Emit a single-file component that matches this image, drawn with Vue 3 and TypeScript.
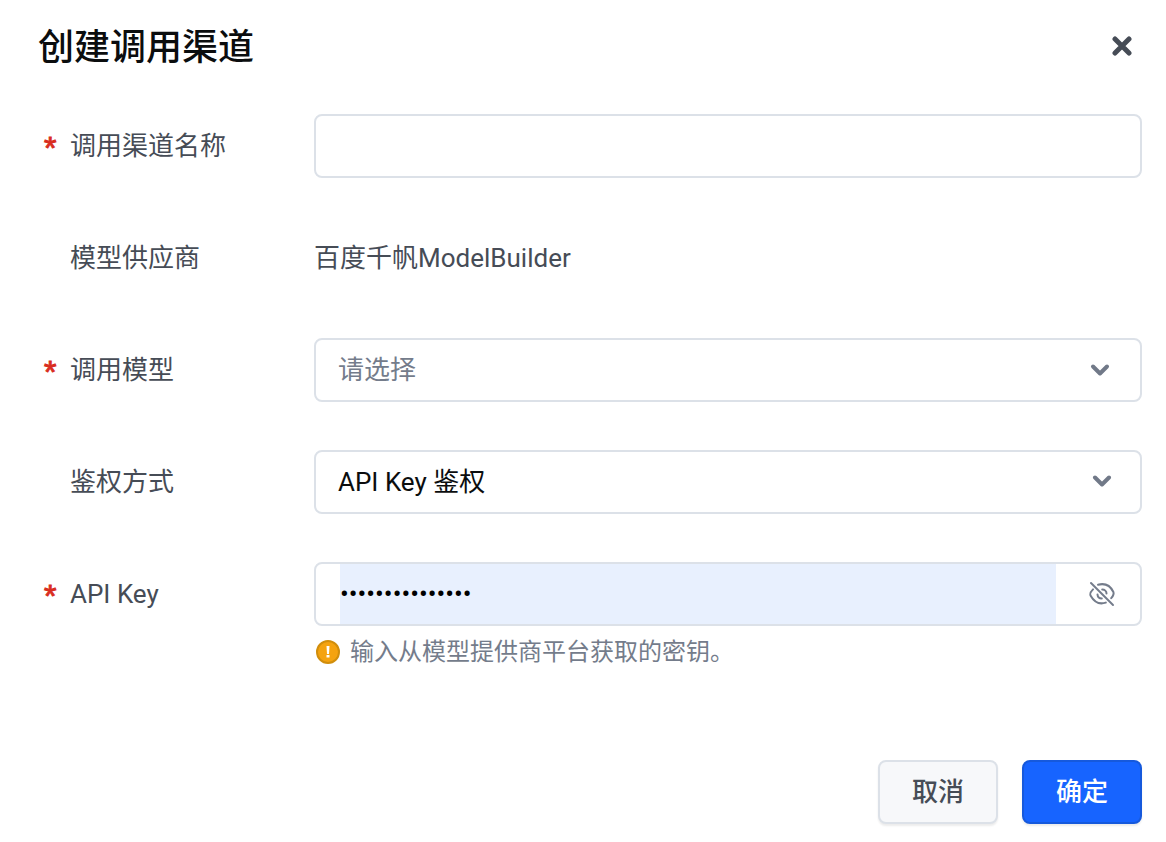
<script setup lang="ts">
import { ref } from 'vue'

const channelName = ref('')
const model = ref('')
const authMode = ref('api-key')
const apiKey = ref('a1b2c3d4e5f6g7h')
const revealed = ref(false)
</script>

<template>
  <form class="dialog" role="dialog" aria-labelledby="dialog-title" autocomplete="off" @submit.prevent>
    <header class="head">
      <h1 id="dialog-title" class="title">创建调用渠道</h1>
      <button class="close" type="button" aria-label="关闭">
        <svg width="20" height="20" viewBox="0 0 20 20" fill="none" stroke="currentColor" stroke-width="5" stroke-linecap="round">
          <path d="M3 3L17 17M17 3L3 17" />
        </svg>
      </button>
    </header>

    <div class="rows">
      <div class="row">
        <label class="label required" for="channel-name">调用渠道名称</label>
        <div class="box">
          <input id="channel-name" v-model="channelName" class="field" type="text" />
        </div>
      </div>

      <div class="row">
        <span class="label">模型供应商</span>
        <span class="value">百度千帆ModelBuilder</span>
      </div>

      <div class="row">
        <label class="label required" for="model">调用模型</label>
        <div class="box">
          <select id="model" v-model="model" class="field placeholder">
            <option value="">请选择</option>
          </select>
          <svg class="chevron inset" width="20" height="14" viewBox="0 0 20 14" fill="none" stroke="currentColor" stroke-width="4" stroke-linecap="round" stroke-linejoin="round">
            <path d="M3 3.5L10 10.5L17 3.5" />
          </svg>
        </div>
      </div>

      <div class="row">
        <label class="label" for="auth-mode">鉴权方式</label>
        <div class="box">
          <select id="auth-mode" v-model="authMode" class="field">
            <option value="api-key">API Key 鉴权</option>
          </select>
          <svg class="chevron" width="20" height="14" viewBox="0 0 20 14" fill="none" stroke="currentColor" stroke-width="4" stroke-linecap="round" stroke-linejoin="round">
            <path d="M3 2.5L10 9.5L17 2.5" />
          </svg>
        </div>
      </div>

      <div class="row">
        <label class="label required" for="api-key">API Key</label>
        <div class="box secret">
          <input id="api-key" v-model="apiKey" class="filled" :type="revealed ? 'text' : 'password'" />
          <button class="eye" type="button" aria-label="显示或隐藏密钥" @click="revealed = !revealed">
            <svg width="28" height="28" viewBox="0 0 28 28" fill="none" stroke="currentColor" stroke-width="2" stroke-linecap="round">
              <path d="M3 3L25 25" />
              <path d="M10 4.7C17 2.9 22.5 6 25.4 12C26.2 14 25.5 15.5 23.2 18.2" />
              <path d="M5 9.4C1.8 12.6 1.6 13.9 2.8 16C6.6 22.6 12.4 24.4 17.8 22.6" />
              <path d="M14.2 9.5C16.7 9.5 18.5 11.2 18.5 13.4" />
              <path d="M9.5 14.6C9.7 16.8 11.5 18.4 13.8 18.5" />
            </svg>
          </button>
        </div>
      </div>
    </div>

    <p class="hint">
      <svg width="24" height="24" viewBox="0 0 24 24" aria-hidden="true">
        <circle cx="12" cy="12" r="11" fill="#f5a30f" stroke="#d18e0c" stroke-width="2" />
        <path d="M10.5 6H13.5L13 14H11Z" fill="#fff" />
        <rect x="10.5" y="15" width="3" height="2.5" fill="#fff" />
      </svg>
      <span>输入从模型提供商平台获取的密钥。</span>
    </p>

    <footer class="actions">
      <button class="btn" type="button">取消</button>
      <button class="btn primary" type="submit">确定</button>
    </footer>
  </form>
</template>

<style>
body {
  margin: 0;
  background: #fff;
}
</style>

<style scoped>
.dialog {
  box-sizing: border-box;
  padding: 22px 24px 18px 38px;
  font-family: Roboto, "Noto Sans CJK SC", sans-serif;
  font-size: 26px;
  line-height: 36px;
  color: #464c56;
}
.head {
  display: flex;
  align-items: center;
  justify-content: space-between;
  height: 48px;
}
.title {
  margin: 0;
  padding-top: 4px;
  font-size: 36px;
  line-height: 48px;
  font-weight: 500;
  color: #0b0d0e;
}
button,
input,
select {
  font: inherit;
}
.close {
  display: flex;
  padding: 10px;
  border: 0;
  background: none;
  color: #464c56;
  cursor: pointer;
}
.rows {
  display: grid;
  gap: 48px;
  margin-top: 44px;
}
.row {
  display: grid;
  grid-template-columns: 276px 1fr;
  align-items: center;
  min-height: 64px;
}
.label {
  display: grid;
  grid-template-columns: 32px 1fr;
}
.label::before {
  content: "";
  padding-left: 6px;
}
.required::before {
  content: "*";
  color: #d92d20;
  font-family: "Liberation Sans", Arial, sans-serif;
  font-size: 32px;
  line-height: 40px;
  height: 36px;
  -webkit-text-stroke: 1px #d92d20;
}
.box {
  box-sizing: border-box;
  position: relative;
  display: flex;
  height: 64px;
  border: 2px solid #dce1e8;
  border-radius: 8px;
  background: #fff;
}
.field {
  flex: 1;
  min-width: 0;
  padding: 0 64px 0 22px;
  border: 0;
  border-radius: 6px;
  outline: 0;
  appearance: none;
  background: transparent;
  color: #0b0d0e;
}
.placeholder {
  color: #747c8b;
}
.chevron {
  position: absolute;
  right: 28px;
  top: 23px;
  color: #717988;
  pointer-events: none;
}
.inset {
  right: 30px;
}
.secret {
  padding-left: 24px;
}
.filled {
  flex: 1;
  min-width: 0;
  padding: 0;
  border: 0;
  outline: 0;
  background: #e8f0fe;
  color: #000;
}
.eye {
  display: flex;
  align-items: center;
  justify-content: center;
  width: 84px;
  padding: 0 0 0 8px;
  border: 0;
  background: none;
  color: #747c8b;
  cursor: pointer;
}
.hint {
  display: flex;
  align-items: center;
  gap: 10px;
  margin: 8px 0 0 278px;
  font-size: 24px;
  color: #747c8b;
}
.actions {
  display: flex;
  justify-content: flex-end;
  gap: 24px;
  margin-top: 90px;
}
.btn {
  box-sizing: border-box;
  min-width: 120px;
  height: 64px;
  padding: 0 32px;
  border: 2px solid #dce1e8;
  border-radius: 8px;
  background: #f7f8fa;
  box-shadow: 0 2px 2px rgba(0, 0, 0, 0.08);
  color: #464c56;
  font-weight: 500;
  cursor: pointer;
}
.primary {
  border-color: #1659dc;
  background: #1764ff;
  color: #fff;
}
</style>
